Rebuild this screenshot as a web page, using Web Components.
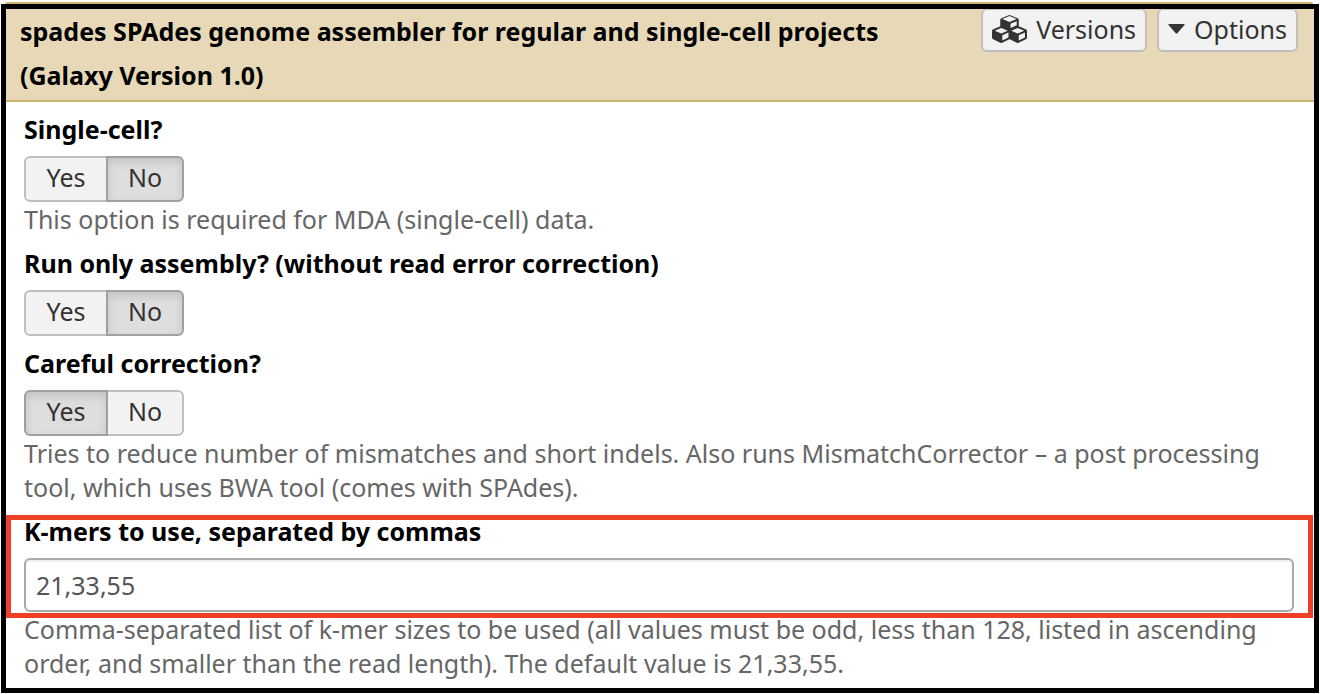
<!DOCTYPE html>
<html lang="en">
<head>
<meta charset="utf-8">
<title>SPAdes – Galaxy</title>
<style>
  body { margin: 0; background: #fff; font-family: "Noto Sans", "Lucida Grande", sans-serif; font-size: 25px; line-height: 34px; color: #000; }
</style>
</head>
<body>
<tool-form>
  <tool-header slot="header" name="spades SPAdes genome assembler for regular and single-cell projects (Galaxy Version 1.0)">
    <tool-button>
      <svg slot="icon" width="35" height="28" viewBox="0 0 2176 1792" preserveAspectRatio="none" fill="#333" aria-hidden="true"><path d="M640 1632l384-192v-314l-384 164v342zM576 1178l404-173-404-173-404 173zM1664 1632l384-192v-314l-384 164v342zM1600 1178l404-173-404-173-404 173zM1152 825l384-165v-266l-384 164v267zM1088 446l441-189-441-189-441 189zM2176 1024v416q0 36-19 67t-52 47l-448 224q-25 14-57 14t-57-14l-448-224q-4-2-7-4-2 2-7 4l-448 224q-25 14-57 14t-57-14l-448-224q-33-16-52-47t-19-67v-416q0-38 21.500-70t56.500-48l434-186v-400q0-38 21.500-70t56.500-48l448-192q23-10 50-10t50 10l448 192q35 16 56.500 48t21.500 70v400l434 186q36 16 57 48t21 70z"/></svg>
      Versions
    </tool-button>
    <tool-button>
      <svg slot="icon" width="17" height="10" viewBox="0 0 17 10" fill="#333" aria-hidden="true"><path d="M1 0h15q1 0 .5 1L9.500 9q-1 1-2 0L.5 1Q0 0 1 0z"/></svg>
      Options
    </tool-button>
  </tool-header>
  <yes-no-field label="Single-cell?" value="No">This option is required for MDA (single-cell) data.</yes-no-field>
  <yes-no-field label="Run only assembly? (without read error correction)" value="No"></yes-no-field>
  <yes-no-field label="Careful correction?" value="Yes">Tries to reduce number of mismatches and short indels. Also runs MismatchCorrector – a post processing tool, which uses BWA tool (comes with SPAdes).</yes-no-field>
  <text-field label="K-mers to use, separated by commas" value="21,33,55">Comma-separated list of k-mer sizes to be used (all values must be odd, less than 128, listed in ascending order, and smaller than the read length). The default value is 21,33,55.</text-field>
</tool-form>
<script>
  class ToolForm extends HTMLElement {
    constructor() {
      super();
      this.attachShadow({ mode: 'open' }).innerHTML = `
        <style>
          :host { display: block; padding: 2px 1px 1px; }
          .edge { height: 2px; margin: 0 6px 0 4px; background: #d0b36f; border-radius: 2px 2px 0 0; }
          main { border: 5px solid #000; }
          .fields { padding: 10px 20px 8px 18px; }
        </style>
        <div class="edge"></div>
        <main>
          <slot name="header"></slot>
          <div class="fields"><slot></slot></div>
        </main>`;
    }
  }

  class ToolHeader extends HTMLElement {
    constructor() {
      super();
      this.attachShadow({ mode: 'open' }).innerHTML = `
        <style>
          :host { display: block; }
          header { display: flex; align-items: flex-start; gap: 24px; padding: 0 16px 3px 14px; background: #e7d9b7; border-bottom: 2px solid #d0b36f; }
          h1 { flex: 1; margin: 0; font-size: 25px; font-weight: 700; line-height: 44px; }
          .actions { display: flex; gap: 10px; }
        </style>
        <header><h1></h1><div class="actions"><slot></slot></div></header>`;
      this.shadowRoot.querySelector('h1').textContent = this.getAttribute('name');
    }
  }

  class ToolButton extends HTMLElement {
    constructor() {
      super();
      this.attachShadow({ mode: 'open' }).innerHTML = `
        <style>
          :host { display: block; }
          button { display: flex; align-items: center; gap: 9px; height: 43px; margin: 0; padding: 0 9px 2px; border: 2px solid #bfbfbf; border-top-width: 1px; border-radius: 6px; background: #f2f2f2; color: #333; font: inherit; }
        </style>
        <button type="button"><slot name="icon"></slot><span><slot></slot></span></button>`;
    }
  }

  const fieldStyles = `
    :host { display: block; }
    .field { padding-bottom: 10px; }
    .label { display: block; font-weight: 700; margin-bottom: 10px; }
    .help { margin: 0; padding-right: 16px; color: #666; }
  `;

  class YesNoField extends HTMLElement {
    constructor() {
      super();
      this.attachShadow({ mode: 'open' }).innerHTML = `
        <style>
          ${fieldStyles}
          .group { display: grid; grid-template-columns: 82px 78px; height: 46px; }
          button { margin: 0; padding: 0 0 4px; border: 2px solid #bfbfbf; background: #f2f2f2; color: #333; font: inherit; }
          .yes { border-radius: 6px 0 0 6px; margin-right: -2px; }
          .no { border-radius: 0 6px 6px 0; }
          button[aria-pressed="true"] { position: relative; background: #dedede; border-color: #a0a0a0; box-shadow: inset 0 4px 8px rgba(0, 0, 0, 0.13); }
        </style>
        <div class="field">
          <span class="label" id="label"></span>
          <div class="group" role="group" aria-labelledby="label">
            <button type="button" class="yes">Yes</button>
            <button type="button" class="no">No</button>
          </div>
          <p class="help"><slot></slot></p>
        </div>`;
      this.shadowRoot.querySelector('.label').textContent = this.getAttribute('label');
      const buttons = [...this.shadowRoot.querySelectorAll('button')];
      const select = value => buttons.forEach(b => b.setAttribute('aria-pressed', String(b.textContent === value)));
      buttons.forEach(b => b.addEventListener('click', () => select(b.textContent)));
      select(this.getAttribute('value'));
    }
  }

  class TextField extends HTMLElement {
    constructor() {
      super();
      this.attachShadow({ mode: 'open' }).innerHTML = `
        <style>
          ${fieldStyles}
          .field { padding-bottom: 0; }
          .marked { position: relative; }
          .marked::after { content: ""; position: absolute; inset: 1px -19px -6px -18px; border: 5px solid #ee4027; pointer-events: none; }
          input { display: block; box-sizing: border-box; width: 100%; height: 54px; margin: 0; padding: 0 10px; border: 2px solid #aaa; border-radius: 6px; background: #fff; box-shadow: inset 0 2px 2px rgba(0, 0, 0, 0.07); color: #555; font: inherit; }
        </style>
        <div class="field">
          <div class="marked">
            <label class="label" for="value"></label>
            <input id="value" type="text">
          </div>
          <p class="help"><slot></slot></p>
        </div>`;
      this.shadowRoot.querySelector('label').textContent = this.getAttribute('label');
      this.shadowRoot.querySelector('input').value = this.getAttribute('value');
    }
  }

  customElements.define('tool-form', ToolForm);
  customElements.define('tool-header', ToolHeader);
  customElements.define('tool-button', ToolButton);
  customElements.define('yes-no-field', YesNoField);
  customElements.define('text-field', TextField);
</script>
</body>
</html>
